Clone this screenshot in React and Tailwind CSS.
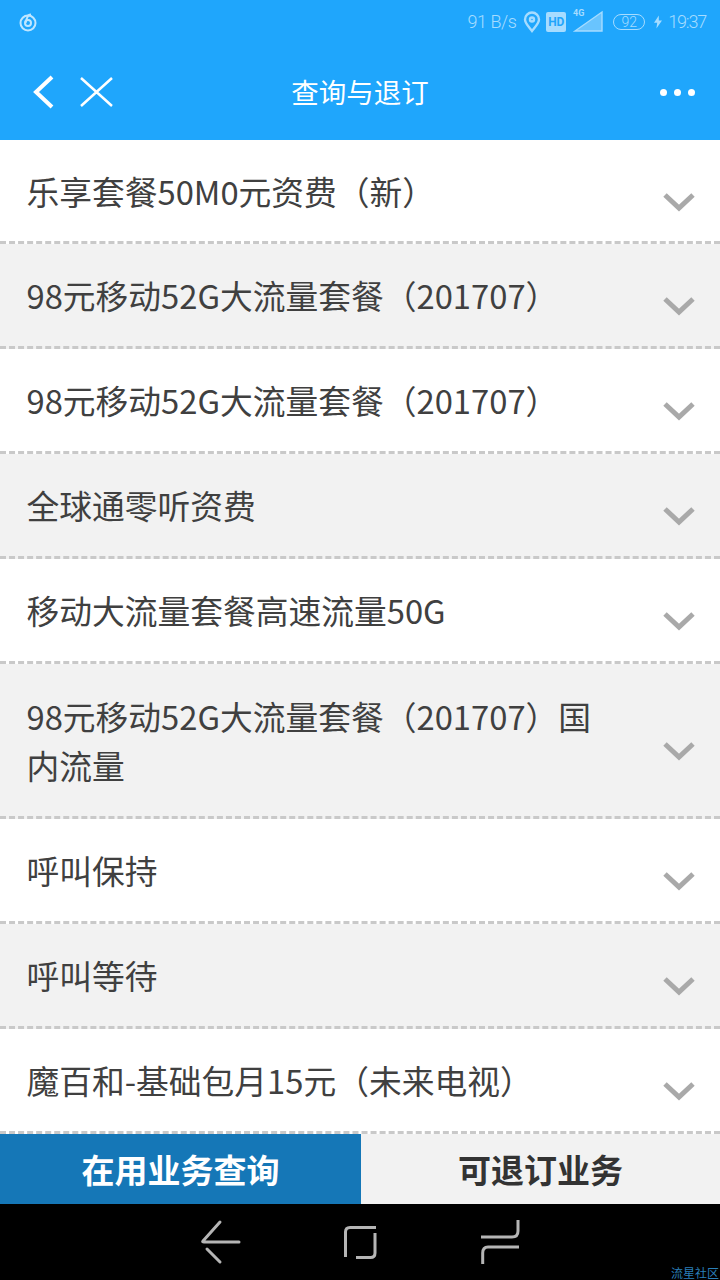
import React from 'react';

const font = { fontFamily: '"Noto Sans CJK SC", "Noto Sans", sans-serif' };

const rows = [
    { text: '乐享套餐50M0元资费（新）' },
    { text: '98元移动52G大流量套餐（201707）' },
    { text: '98元移动52G大流量套餐（201707）' },
    { text: '全球通零听资费' },
    { text: '移动大流量套餐高速流量50G' },
    { text: '98元移动52G大流量套餐（201707）国内流量', tall: true },
    { text: '呼叫保持' },
    { text: '呼叫等待' },
    { text: '魔百和-基础包月15元（未来电视）' },
];

const Chevron = () => (
    <svg width="34" height="22" viewBox="0 0 34 22" fill="none" className="shrink-0 mt-[22px]">
        <path d="M3 4 L17 17 L31 4" stroke="#a9a9a9" strokeWidth="5" />
    </svg>
);

const StatusBar = () => (
    <div className="h-[44px] flex items-center justify-between pl-[18px] pr-[14px] text-[#a6dcff]">
        <svg width="20" height="20" viewBox="0 0 20 20" fill="none" stroke="#bfe6ff" strokeWidth="2">
            <circle cx="10" cy="11" r="7.5" />
            <circle cx="10" cy="11" r="3" />
            <path d="M13 2.5 C10.5 2.5 9.5 4 9 6 L7.5 11" />
        </svg>
        <div className="flex items-center text-[18px] leading-none" style={{ fontFamily: '"Roboto", sans-serif', fontWeight: 300 }}>
            <span className="tracking-[-0.5px]">91 B/s</span>
            <svg width="18" height="22" viewBox="0 0 18 22" fill="none" stroke="#a6dcff" strokeWidth="2.4" className="ml-[7px]">
                <path d="M9 20 C5 15 2 12 2 8.5 A7 7 0 0 1 16 8.5 C16 12 13 15 9 20 Z" />
                <circle cx="9" cy="8.5" r="2" />
            </svg>
            <span className="ml-[5px] w-[20px] h-[20px] rounded-[2px] bg-[#a6dcff] text-[#1fa6fc] text-[12px] font-bold flex items-center justify-center">HD</span>
            <svg width="30" height="24" viewBox="0 0 30 24" fill="none" className="ml-[7px] -mt-[4px]">
                <path d="M2 23 L29 4 V23 Z" fill="#a6dcff" fillOpacity="0.55" stroke="#a6dcff" strokeWidth="1.4" />
                <text x="0" y="8" fontSize="9" fill="#a6dcff" fontWeight="700">4G</text>
            </svg>
            <span className="ml-[10px] w-[32px] h-[16px] rounded-full border border-[#a6dcff] text-[14px] flex items-center justify-center">92</span>
            <svg width="8" height="16" viewBox="0 0 10 16" fill="#a6dcff" className="ml-[9px]">
                <path d="M6 0 L0 9 H4 L3 16 L10 6 H6 Z" />
            </svg>
            <span className="ml-[6px] tracking-[-1.2px]">19:37</span>
        </div>
    </div>
);

const Header = () => (
    <div className="bg-[#1fa6fc] h-[140px] shrink-0">
        <StatusBar />
        <div className="relative h-[96px] flex items-center justify-between pl-[33px] pr-[25px]">
            <div className="flex items-center gap-[26px]">
                <svg width="21" height="34" viewBox="0 0 21 34" fill="none" stroke="white" strokeWidth="4">
                    <path d="M19 2 L3 17 L19 32" />
                </svg>
                <svg width="33" height="30" viewBox="0 0 33 30" fill="none" stroke="white" strokeWidth="2.5">
                    <path d="M1 1 L32 29 M32 1 L1 29" />
                </svg>
            </div>
            <span className="absolute inset-x-0 text-center text-white text-[27.5px]" style={font}>查询与退订</span>
            <div className="flex items-center gap-[7px]">
                <span className="w-[7px] h-[7px] rounded-full bg-white" />
                <span className="w-[7px] h-[7px] rounded-full bg-white" />
                <span className="w-[7px] h-[7px] rounded-full bg-white" />
            </div>
        </div>
    </div>
);

export default function App() {
    return (
        <div className="w-[720px] h-[1280px] flex flex-col bg-white overflow-hidden" style={font}>
            <Header />
            <div className="flex-1 overflow-hidden">
                {rows.map((row, i) => (
                    <div
                        key={i}
                        className={`flex items-center justify-between pl-[26.5px] pr-[24px] border-b-[3px] border-dashed border-[#c9c9c9] ${
                            row.tall ? 'h-[155px]' : i === 0 ? 'h-[104px]' : 'h-[105px]'
                        } ${i % 2 === 1 ? 'bg-[#f2f2f2]' : 'bg-white'}`}
                    >
                        <span className="text-[32.75px] leading-[49px] text-[#404040] w-[580px] -mt-[1px]">{row.text}</span>
                        <Chevron />
                    </div>
                ))}
            </div>
            <div className="h-[70px] flex shrink-0">
                <div className="w-[361px] pt-[1px] bg-[#1577b7] text-white text-[33px] font-bold flex items-center justify-center">在用业务查询</div>
                <div className="flex-1 pt-[1px] bg-[#f2f2f2] text-[#333333] text-[33px] font-bold flex items-center justify-center">可退订业务</div>
            </div>
            <div className="relative h-[76px] bg-black shrink-0 flex items-center justify-center gap-[101px]">
                <svg width="42" height="46" viewBox="0 0 42 46" fill="none" stroke="#b5b5b5" strokeWidth="3" strokeLinecap="round">
                    <path d="M20 3 L3 22 Q2 23 4 23 H39 M7 30 L20 43" />
                </svg>
                <svg width="34" height="46" viewBox="0 0 34 46" fill="none" stroke="#b5b5b5" strokeWidth="3">
                    <path d="M33 8.5 H7 Q2.5 8.5 2.5 13 V38 M32 14 V34 Q32 38.5 27.5 38.5 H13" />
                </svg>
                <svg width="40" height="46" viewBox="0 0 40 46" fill="none" stroke="#b5b5b5" strokeWidth="3" className="ml-[2px]">
                    <path d="M38 1 V12 Q38 18 32 18 H1 M39 28 H8 Q2.7 28 2.7 34 V45" />
                </svg>
                <span className="absolute right-[1px] bottom-0 text-[12px] leading-[14px] text-[#2a7fb8]">流星社区</span>
            </div>
        </div>
    );
}
